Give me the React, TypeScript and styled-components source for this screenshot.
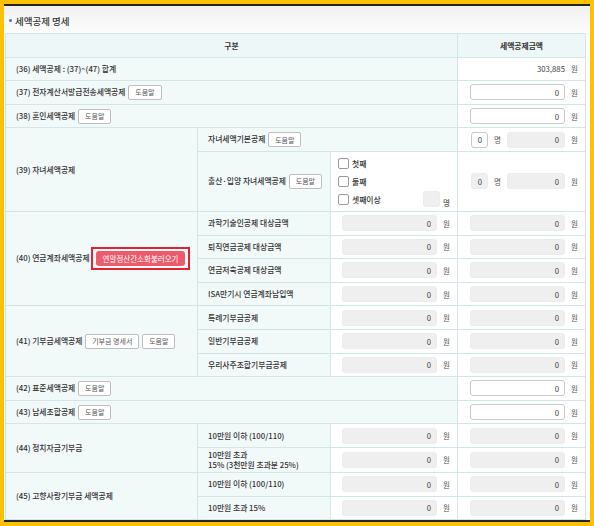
import styled, { createGlobalStyle } from 'styled-components';

const GlobalStyle = createGlobalStyle`
  html, body {
    margin: 0;
    padding: 0;
  }
  body {
    background: #fcc200;
    font-family: "Noto Sans CJK KR", "Noto Sans", sans-serif;
    color: #333;
  }
`;

interface IFieldProps {
  value?: string;
  width?: number;
  gray?: boolean;
  unit?: string;
}

function AmountField({ value = '0', width = 95, gray = false, unit = '원' }: IFieldProps) {
  return (
    <S.Field>
      <S.Input $w={width} $gray={gray} readOnly value={value} />
      <S.Unit>{unit}</S.Unit>
    </S.Field>
  );
}

function ChildField({ grayCount }: { grayCount: boolean }) {
  return (
    <S.Field>
      <S.Input $w={17} $gray={grayCount} readOnly value="0" />
      <S.Unit>명</S.Unit>
      <S.Input $w={58} $gray readOnly value="0" />
      <S.Unit>원</S.Unit>
    </S.Field>
  );
}

function Help({ children = '도움말' }: { children?: string }) {
  return <S.HelpButton type="button">{children}</S.HelpButton>;
}

const pensionRows = ['과학기술인공제 대상금액', '퇴직연금공제 대상금액', '연금저축공제 대상금액', 'ISA만기시 연금계좌납입액'];
const donationRows = ['특례기부금공제', '일반기부금공제', '우리사주조합기부금공제'];

export default function App() {
  return (
    <>
      <GlobalStyle />
      <S.Frame>
        <S.Title>
          <S.Dot />
          세액공제 명세
        </S.Title>
        <S.Table>
          <colgroup>
            <S.Col $w={192} />
            <S.Col $w={133} />
            <S.Col $w={127} />
            <S.Col $w={128} />
          </colgroup>
          <thead>
            <S.Row>
              <S.Th colSpan={3}>구분</S.Th>
              <S.Th>세액공제금액</S.Th>
            </S.Row>
          </thead>
          <tbody>
            <S.Row>
              <S.Label colSpan={3}>(36) 세액공제 : (37)~(47) 합계</S.Label>
              <S.Value>
                <S.Field>
                  <S.Plain>303,885</S.Plain>
                  <S.Unit>원</S.Unit>
                </S.Field>
              </S.Value>
            </S.Row>
            <S.Row>
              <S.Label colSpan={3}>
                (37) 전자계산서발급전송세액공제 <Help />
              </S.Label>
              <S.Value>
                <AmountField />
              </S.Value>
            </S.Row>
            <S.Row>
              <S.Label colSpan={3}>
                (38) 혼인세액공제 <Help />
              </S.Label>
              <S.Value>
                <AmountField />
              </S.Value>
            </S.Row>

            <S.Row>
              <S.Label rowSpan={2}>(39) 자녀세액공제</S.Label>
              <S.Label colSpan={2}>
                자녀세액기본공제 <Help />
              </S.Label>
              <S.Value>
                <ChildField grayCount={false} />
              </S.Value>
            </S.Row>
            <S.Row $h={60}>
              <S.Label>
                출산·입양 자녀세액공제 <Help />
              </S.Label>
              <S.CheckCell>
                <S.CheckLine>
                  <S.Box />
                  첫째
                </S.CheckLine>
                <S.CheckLine>
                  <S.Box />
                  둘째
                </S.CheckLine>
                <S.CheckLine>
                  <S.Box />
                  셋째이상
                  <S.Spacer />
                  <S.Input $w={17} $gray readOnly value="" />
                  <S.Unit $low>명</S.Unit>
                </S.CheckLine>
              </S.CheckCell>
              <S.Value>
                <ChildField grayCount />
              </S.Value>
            </S.Row>

            {pensionRows.map((name, i) => (
              <S.Row key={name}>
                {i === 0 && (
                  <S.Label rowSpan={pensionRows.length}>
                    (40) 연금계좌세액공제
                    <S.Highlight>
                      <S.CallButton type="button">연말정산간소화불러오기</S.CallButton>
                    </S.Highlight>
                  </S.Label>
                )}
                <S.Label>{name}</S.Label>
                <S.Value>
                  <AmountField gray />
                </S.Value>
                <S.Value>
                  <AmountField gray />
                </S.Value>
              </S.Row>
            ))}

            {donationRows.map((name, i) => (
              <S.Row key={name}>
                {i === 0 && (
                  <S.Label rowSpan={donationRows.length}>
                    (41) 기부금세액공제 <Help>기부금 명세서</Help> <Help />
                  </S.Label>
                )}
                <S.Label>{name}</S.Label>
                <S.Value>
                  <AmountField gray />
                </S.Value>
                <S.Value>
                  <AmountField gray />
                </S.Value>
              </S.Row>
            ))}

            <S.Row>
              <S.Label colSpan={3}>
                (42) 표준세액공제 <Help />
              </S.Label>
              <S.Value>
                <AmountField />
              </S.Value>
            </S.Row>
            <S.Row>
              <S.Label colSpan={3}>
                (43) 납세조합공제 <Help />
              </S.Label>
              <S.Value>
                <AmountField />
              </S.Value>
            </S.Row>

            <S.Row>
              <S.Label rowSpan={2}>(44) 정치자금기부금</S.Label>
              <S.Label>10만원 이하 (100/110)</S.Label>
              <S.Value>
                <AmountField gray />
              </S.Value>
              <S.Value>
                <AmountField gray />
              </S.Value>
            </S.Row>
            <S.Row $h={25}>
              <S.Label $tight>
                10만원 초과
                <br />
                15% (3천만원 초과분 25%)
              </S.Label>
              <S.Value>
                <AmountField gray />
              </S.Value>
              <S.Value>
                <AmountField gray />
              </S.Value>
            </S.Row>

            <S.Row>
              <S.Label rowSpan={2}>(45) 고향사랑기부금 세액공제</S.Label>
              <S.Label>10만원 이하 (100/110)</S.Label>
              <S.Value>
                <AmountField gray />
              </S.Value>
              <S.Value>
                <AmountField gray />
              </S.Value>
            </S.Row>
            <S.Row>
              <S.Label>10만원 초과 15%</S.Label>
              <S.Value>
                <AmountField gray />
              </S.Value>
              <S.Value>
                <AmountField gray />
              </S.Value>
            </S.Row>
          </tbody>
        </S.Table>
      </S.Frame>
    </>
  );
}

const S = {
  Frame: styled.div`
    margin: 4px;
    height: 514px;
    padding: 0 5px 0 1px;
    border-top: 2px solid #242424;
    border-bottom: 2px solid #242424;
    background: linear-gradient(#f1f1f1, #ffffff 34px);
    overflow: hidden;
  `,

  Title: styled.h2`
    display: flex;
    align-items: center;
    height: 27px;
    margin: 0;
    padding: 2px 0 0 4px;
    box-sizing: border-box;
    font-size: 9.5px;
    font-weight: 500;
    color: #333;
  `,

  Dot: styled.span`
    width: 3px;
    height: 3px;
    margin-right: 3px;
    border-radius: 50%;
    background: #3f74d6;
  `,

  Table: styled.table`
    width: 580px;
    table-layout: fixed;
    border-collapse: collapse;
    border: 1px solid #d2e6e8;
    background: #fff;
  `,

  Col: styled.col<{ $w: number }>`
    width: ${p => p.$w}px;
  `,

  Row: styled.tr<{ $h?: number }>`
    height: ${p => p.$h ?? 23.6}px;
  `,

  Th: styled.th`
    padding: 0;
    border: 1px solid #d2e6e8;
    background: #eef7f7;
    font-size: 7.8px;
    font-weight: 700;
    color: #333;
    text-align: center;
  `,

  Label: styled.td<{ $tight?: boolean }>`
    padding: ${p => (p.$tight ? '1px 0 0 10px' : '0 0 0 10px')};
    border: 1px solid #d2e6e8;
    background: #f2f9f9;
    font-size: 7.8px;
    font-weight: 500;
    line-height: ${p => (p.$tight ? '10.5px' : '12px')};
    color: #333;
    white-space: nowrap;
    vertical-align: middle;
  `,

  Value: styled.td`
    padding: 0 7px 0 0;
    border: 1px solid #d2e6e8;
    background: #fff;
    vertical-align: middle;
  `,

  CheckCell: styled.td`
    padding: 0 7px 0 7px;
    border: 1px solid #d2e6e8;
    background: #fff;
    vertical-align: middle;
  `,

  CheckLine: styled.div`
    display: flex;
    align-items: center;
    height: 18px;
    gap: 3px;
    font-size: 7.8px;
    font-weight: 500;
    color: #333;
  `,

  Box: styled.span`
    width: 9px;
    height: 9px;
    border: 1px solid #9a9a9a;
    border-radius: 2px;
    background: #fff;
  `,

  Spacer: styled.span`
    flex: 1;
  `,

  Field: styled.div`
    display: flex;
    align-items: center;
    justify-content: flex-end;
    gap: 6px;
  `,

  Input: styled.input<{ $w: number; $gray: boolean }>`
    width: ${p => p.$w}px;
    height: 16px;
    box-sizing: border-box;
    margin: 0;
    padding: 0 5px 0 0;
    border: 1px solid ${p => (p.$gray ? '#ececec' : '#c9c9c9')};
    border-radius: 3px;
    background: ${p => (p.$gray ? '#efefef' : '#fff')};
    font-family: inherit;
    font-size: 7.8px;
    color: #444;
    text-align: right;
    outline: none;
  `,

  Plain: styled.span`
    font-size: 7.8px;
    color: #444;
  `,

  Unit: styled.span<{ $low?: boolean }>`
    width: 7px;
    margin-top: ${p => (p.$low ? '6px' : '0')};
    font-size: 7.5px;
    color: #555;
  `,

  HelpButton: styled.button`
    height: 15px;
    margin: 0 0 0 1px;
    padding: 0 6px;
    border: 1px solid #bdbdbd;
    border-radius: 2px;
    background: #fff;
    font-family: inherit;
    font-size: 7px;
    color: #555;
    vertical-align: middle;
    cursor: pointer;
  `,

  Highlight: styled.span`
    display: inline-block;
    margin-left: 1px;
    padding: 2px 3px;
    border: 2px solid #e2232f;
    vertical-align: middle;
  `,

  CallButton: styled.button`
    display: block;
    height: 15px;
    padding: 0 7px;
    border: none;
    border-radius: 3px;
    background: #ec5b6c;
    font-family: inherit;
    font-size: 7.5px;
    color: #fff;
    cursor: pointer;
  `,
};
